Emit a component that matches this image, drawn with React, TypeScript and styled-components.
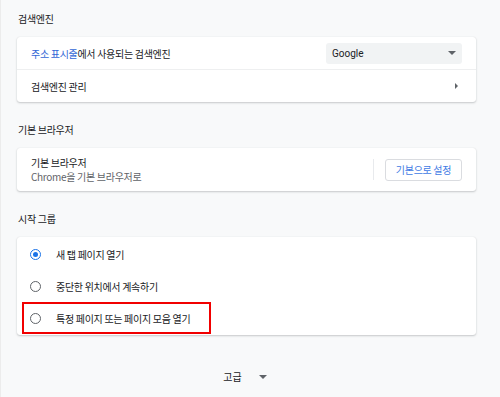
import { FC } from 'react'
import styled, { createGlobalStyle } from 'styled-components'

const GlobalStyle = createGlobalStyle`
  html, body {
    margin: 0;
    padding: 0;
    background: #f8f9fa;
  }
  body {
    font-family: "Noto Sans CJK KR", "Noto Sans", sans-serif;
    color: #202124;
  }
`

const Page = styled.div`
  width: 500px;
  height: 397px;
  box-sizing: border-box;
  padding: 12px 24px 0 16px;
  display: flex;
  flex-direction: column;
  background: #f8f9fa;
  border-left: 1px solid #ececec;
`

const SectionTitle = styled.div`
  font-size: 10px;
  line-height: 14px;
  padding-left: 1px;
  color: #202124;
  margin-bottom: 11px;
  letter-spacing: -0.3px;
`

const Card = styled.div<{ $gap?: number }>`
  background: #fff;
  border-radius: 3px;
  box-shadow: 0 1px 2px rgba(60, 64, 67, 0.25), 0 0 1px rgba(60, 64, 67, 0.15);
  margin-bottom: ${p => p.$gap ?? 21}px;
  display: flex;
  flex-direction: column;
`

const Row = styled.div<{ $h: number; $divider?: boolean }>`
  height: ${p => p.$h}px;
  display: flex;
  align-items: center;
  padding: 0 14px;
  border-top: ${p => (p.$divider ? '1px solid #eeeff0' : 'none')};
  font-size: 10px;
  letter-spacing: -0.3px;
`

const Label = styled.div`
  flex: 1;
`

const Blue = styled.span`
  color: #3367d6;
`

const Select = styled.div`
  width: 136px;
  height: 21px;
  box-sizing: border-box;
  background: #f1f3f4;
  border-radius: 3px;
  display: flex;
  align-items: center;
  justify-content: space-between;
  padding: 0 6px 0 6px;
  font-family: Roboto, "Noto Sans", sans-serif;
  font-size: 10px;
  letter-spacing: 0;
`

const Caret = styled.span<{ $dir?: 'down' | 'right' }>`
  width: 0;
  height: 0;
  ${p =>
    p.$dir === 'right'
      ? 'border-top: 3px solid transparent; border-bottom: 3px solid transparent; border-left: 3px solid #5f6368;'
      : 'border-left: 4px solid transparent; border-right: 4px solid transparent; border-top: 4px solid #5f6368;'}
`

const TwoLine = styled.div`
  flex: 1;
  display: flex;
  flex-direction: column;
  line-height: 13.5px;
`

const Secondary = styled.div`
  color: #5f6368;
`

const VDivider = styled.div`
  width: 1px;
  height: 21px;
  background: #e8eaed;
  margin-right: 11px;
`

const Button = styled.button`
  width: 77px;
  height: 22px;
  box-sizing: border-box;
  border: 1px solid #dadce0;
  border-radius: 3px;
  background: #fff;
  color: #3f7be4;
  font-family: inherit;
  font-size: 10px;
  letter-spacing: -0.3px;
  padding: 0;
`

const RadioList = styled.div`
  display: flex;
  flex-direction: column;
  padding: 1px 0 1px;
`

const RadioRow = styled.div`
  height: 32px;
  display: flex;
  align-items: center;
  gap: 15px;
  padding-left: 13px;
  position: relative;
  font-size: 10px;
  letter-spacing: -0.3px;
`

const Highlight = styled.div`
  position: absolute;
  left: 5px;
  top: 0;
  width: 189px;
  height: 32px;
  box-sizing: border-box;
  border: 2px solid #f10000;
`

const Radio = styled.span<{ $checked?: boolean }>`
  width: 11px;
  height: 11px;
  box-sizing: border-box;
  border-radius: 50%;
  border: 1.5px solid ${p => (p.$checked ? '#1a73e8' : '#5f6368')};
  display: flex;
  align-items: center;
  justify-content: center;
  &::after {
    content: '';
    width: 5px;
    height: 5px;
    border-radius: 50%;
    background: ${p => (p.$checked ? '#1a73e8' : 'transparent')};
  }
`

const Advanced = styled.div`
  display: flex;
  align-items: center;
  justify-content: center;
  gap: 17px;
  margin-top: 35px;
  padding-right: 3px;
  font-size: 10px;
  line-height: 14px;
  color: #202124;
`

const options = ['새 탭 페이지 열기', '중단한 위치에서 계속하기', '특정 페이지 또는 페이지 모음 열기']

const App: FC = () => {
  return (
    <Page>
      <GlobalStyle />
      <SectionTitle>검색엔진</SectionTitle>
      <Card>
        <Row $h={32}>
          <Label>
            <Blue>주소 표시줄</Blue>에서 사용되는 검색엔진
          </Label>
          <Select>
            <span>Google</span>
            <Caret />
          </Select>
        </Row>
        <Row $h={32} $divider>
          <Label>검색엔진 관리</Label>
          <Caret $dir="right" />
          <span style={{ width: 4 }} />
        </Row>
      </Card>

      <SectionTitle>기본 브라우저</SectionTitle>
      <Card>
        <Row $h={43}>
          <TwoLine>
            <div>기본 브라우저</div>
            <Secondary>Chrome을 기본 브라우저로</Secondary>
          </TwoLine>
          <VDivider />
          <Button>기본으로 설정</Button>
        </Row>
      </Card>

      <SectionTitle>시작 그룹</SectionTitle>
      <Card $gap={0}>
        <RadioList>
          {options.map((o, i) => (
            <RadioRow key={o}>
              {i === 2 && <Highlight />}
              <Radio $checked={i === 0} />
              <span>{o}</span>
            </RadioRow>
          ))}
        </RadioList>
      </Card>

      <Advanced>
        <span>고급</span>
        <Caret />
      </Advanced>
    </Page>
  )
}

export default App
